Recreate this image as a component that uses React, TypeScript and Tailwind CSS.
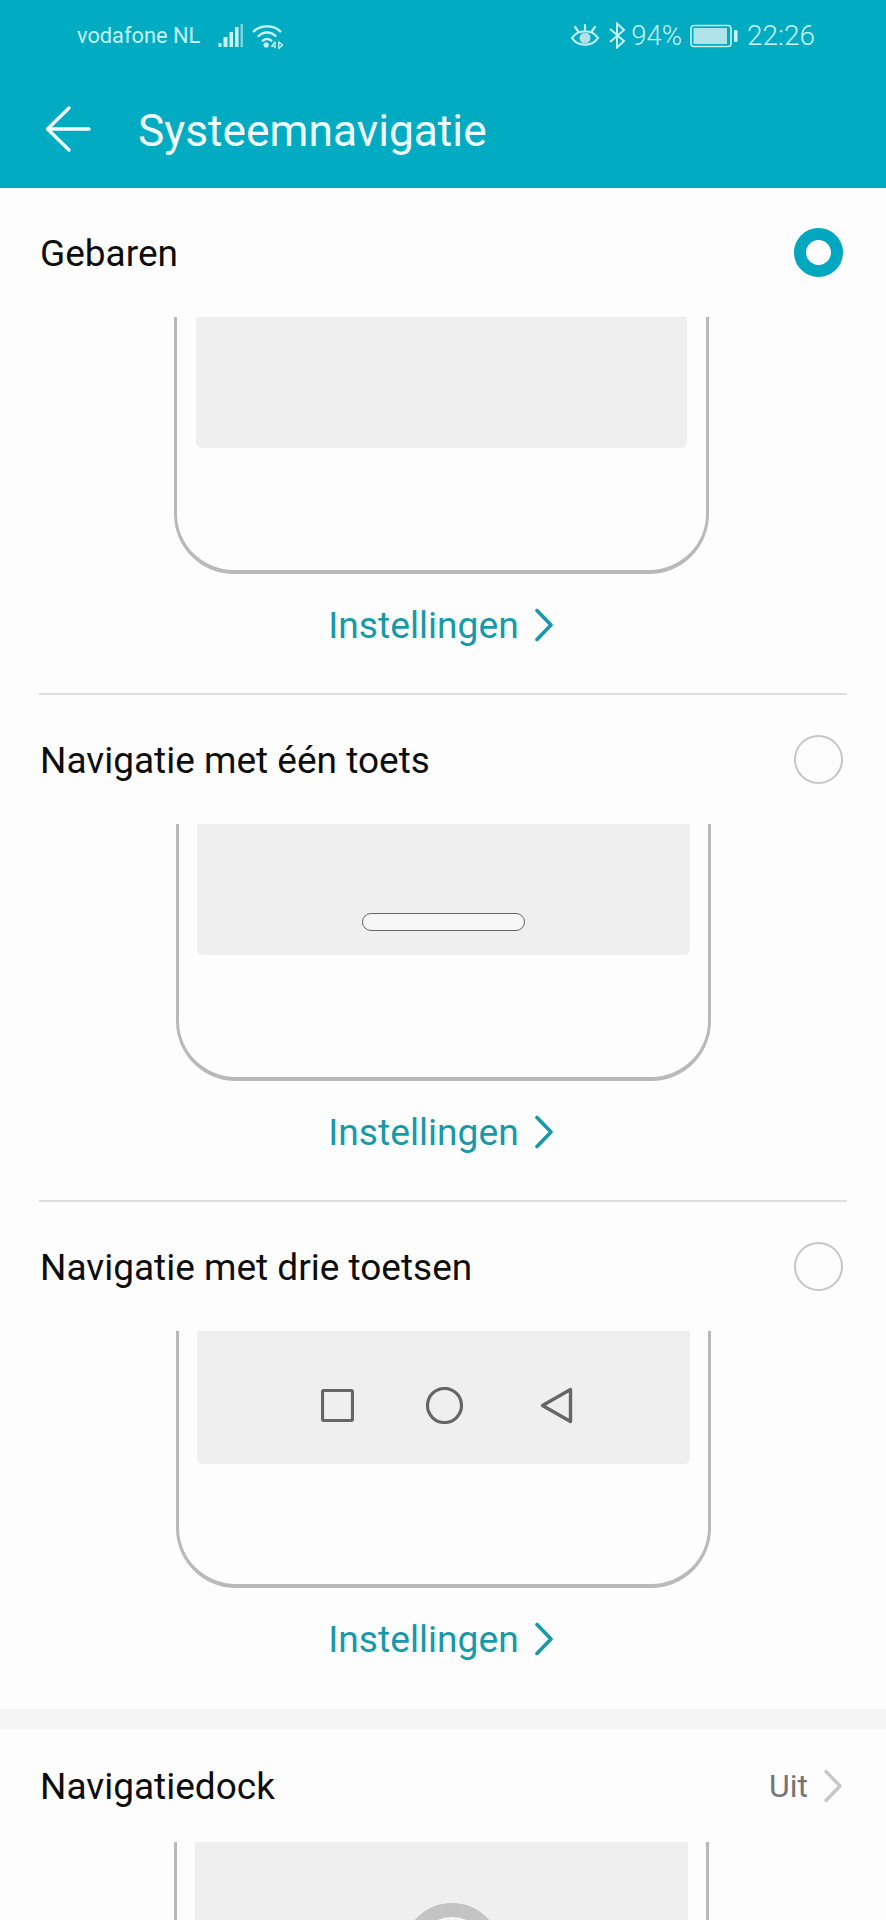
function Signal() {
  return (
    <svg width="26" height="26" viewBox="0 0 26 26" className="ml-[18px]">
      <rect x="0.5" y="20" width="3" height="4" fill="#c9f4f8" />
      <rect x="5.5" y="14" width="4" height="10" fill="#c9f4f8" />
      <rect x="11.5" y="9" width="3.5" height="15" fill="#c9f4f8" />
      <rect x="17" y="4" width="3.5" height="20" fill="#c9f4f8" />
      <rect x="22.5" y="1" width="2.5" height="23" fill="#7fd3df" />
    </svg>
  );
}

function Wifi() {
  return (
    <svg width="32" height="28" viewBox="0 0 34 28" fill="none" stroke="#c9f4f8" strokeWidth="2.6" className="ml-[8px]">
      <path d="M2 9C9 2 23 2 30 9" strokeLinecap="round" />
      <path d="M7 14C12 9 20 9 25 14" strokeLinecap="round" />
      <path d="M11.5 19C14 16.5 18 16.5 20.5 19" strokeLinecap="round" />
      <circle cx="15" cy="23.5" r="2.8" fill="#c9f4f8" stroke="none" />
      <path d="M24.5 20L21 25H25M24.5 20V27" strokeWidth="1.4" />
      <path d="M28.5 19.5V27L32.5 23.5L28.5 20.5" strokeWidth="1.4" />
    </svg>
  );
}

function Eye() {
  return (
    <svg width="30" height="26" viewBox="0 0 30 26" fill="none" stroke="#c9f4f8" strokeWidth="2.2" strokeLinecap="round">
      <path d="M2 15C8 6 22 6 28 15C22 24 8 24 2 15Z" />
      <circle cx="15" cy="15" r="5.5" fill="#b7dfe6" stroke="none" />
      <path d="M15 2V6M5 4L8 8M25 4L22 8" />
    </svg>
  );
}

function Bluetooth() {
  return (
    <svg width="18" height="27" viewBox="0 0 18 27" fill="none" stroke="#c9f4f8" strokeWidth="2" className="ml-[8px]">
      <path d="M2 7L16 19L9 25.5V1.5L16 8L2 20" />
    </svg>
  );
}

function Battery() {
  return (
    <svg width="48" height="24" viewBox="0 0 48 24" fill="none" className="ml-[8px]">
      <rect x="1" y="1.5" width="40" height="21" rx="3" stroke="#c9f4f8" strokeWidth="1.6" />
      <rect x="3.5" y="4" width="33.5" height="16" fill="#aee3ea" />
      <rect x="44" y="6" width="3.5" height="12" rx="1" fill="#c9f4f8" />
    </svg>
  );
}

function StatusBar() {
  return (
    <div className="flex h-[70px] items-center justify-between pl-[77px] pr-[71px] pt-[1px] text-[#c9f4f8]">
      <div className="flex items-center">
        <span className="text-[21.8px] leading-none">vodafone NL</span>
        <Signal />
        <Wifi />
      </div>
      <div className="flex items-center">
        <Eye />
        <Bluetooth />
        <span className="ml-[5px] text-[27.5px] font-light leading-none">94%</span>
        <Battery />
        <span className="ml-[9px] text-[28px] font-light leading-none">22:26</span>
      </div>
    </div>
  );
}

function Header() {
  return (
    <header className="h-[188px] bg-[#01abc2]">
      <StatusBar />
      <div className="flex h-[118px] items-start pl-[45px] pt-[34px]">
        <svg width="46" height="50" viewBox="0 0 46 50" fill="none" stroke="#f4fdfe" strokeWidth="3.4" strokeLinecap="round" strokeLinejoin="round">
          <path d="M44 25H3M24 4L2.5 25L24 46" />
        </svg>
        <h1 className="ml-[47px] text-[44.3px] leading-[54px] text-[#f1fcfd]">Systeemnavigatie</h1>
      </div>
    </header>
  );
}

function Radio({ selected }: { selected?: boolean }) {
  return selected ? (
    <div className="h-[49px] w-[49px] rounded-full border-[12px] border-[#00a7bf] bg-white" />
  ) : (
    <div className="h-[49px] w-[49px] rounded-full border-2 border-[#c6c6c6]" />
  );
}

function Settings() {
  return (
    <div className="flex items-center justify-center pr-[5px]">
      <span className="text-[37.2px] leading-[44px] text-[#1799a9]">Instellingen</span>
      <svg width="18" height="34" viewBox="0 0 18 34" fill="none" stroke="#1799a9" strokeWidth="3.6" strokeLinecap="round" strokeLinejoin="round" className="ml-[16px]">
        <path d="M2 2.5L16 17L2 31.5" />
      </svg>
    </div>
  );
}

function NavSection({
  label,
  selected,
  frameClass,
  panelClass,
  children,
  divider,
  bottom,
}: {
  label: string;
  selected?: boolean;
  frameClass: string;
  panelClass: string;
  children?: React.ReactNode;
  divider?: boolean;
  bottom: string;
}) {
  return (
    <section>
      <div className="flex h-[129px] items-center justify-between pl-[40px] pr-[43px]">
        <span className="pt-[2px] text-[37px] leading-[46px] text-[#0d0d0d]">{label}</span>
        <Radio selected={selected} />
      </div>
      <div className={frameClass}>
        <div className={panelClass}>{children}</div>
      </div>
      <div className={`${bottom} pt-[29px]`}>
        <Settings />
      </div>
      {divider && <div className="mx-[39px] h-[2px] bg-[#dedede]" />}
    </section>
  );
}

export default function App() {
  return (
    <div
      className="h-[1920px] w-[886px] overflow-hidden bg-[#fdfdfd]"
      style={{ fontFamily: "Roboto, sans-serif" }}
    >
      <Header />
      <NavSection
        label="Gebaren"
        selected
        frameClass="ml-[174px] h-[257px] w-[535px] rounded-b-[60px] border-x-[3px] border-b-[4px] border-[#b9b9b9] pl-[19px] pr-[19px]"
        panelClass="h-[131px] rounded-b-[6px] bg-[#efefef]"
        divider
        bottom="h-[119px]"
      />
      <NavSection
        label="Navigatie met één toets"
        frameClass="ml-[176px] h-[257px] w-[535px] rounded-b-[60px] border-x-[3px] border-b-[4px] border-[#b9b9b9] px-[18px]"
        panelClass="flex h-[131px] justify-center rounded-b-[6px] bg-[#efefef] pt-[89px]"
        divider
        bottom="h-[119px]"
      >
        <div className="h-[18px] w-[163px] rounded-[9px] border border-[#666666] bg-[#f6f6f6]" />
      </NavSection>
      <NavSection
        label="Navigatie met drie toetsen"
        frameClass="ml-[176px] h-[257px] w-[535px] rounded-b-[60px] border-x-[3px] border-b-[4px] border-[#b9b9b9] px-[18px]"
        panelClass="flex h-[133px] items-center rounded-b-[6px] bg-[#efefef] pl-[124px] pt-[16px]"
        bottom="h-[121px]"
      >
        <svg width="33" height="33" viewBox="0 0 33 33" fill="none" stroke="#666666" strokeWidth="3.2" strokeLinejoin="round">
          <rect x="1.5" y="1.5" width="30" height="30" rx="1.5" />
        </svg>
        <svg width="37" height="37" viewBox="0 0 37 37" fill="none" stroke="#666666" strokeWidth="3.2" className="ml-[72px]">
          <circle cx="18.5" cy="18.5" r="17" />
        </svg>
        <svg width="33" height="37" viewBox="0 0 33 37" fill="none" stroke="#666666" strokeWidth="3.4" strokeLinecap="round" strokeLinejoin="round" className="ml-[77px]">
          <path d="M2.5 18.5L30.5 2.5V34.5Z" />
        </svg>
      </NavSection>
      <div className="h-[20px] bg-[#f5f5f5]" />
      <section>
        <div className="flex h-[113px] items-center justify-between pl-[40px] pr-[44px]">
          <span className="pt-[2px] text-[37px] leading-[46px] text-[#0d0d0d]">Navigatiedock</span>
          <div className="flex items-center">
            <span className="text-[32px] leading-[44px] text-[#757575]">Uit</span>
            <svg width="18" height="34" viewBox="0 0 18 34" fill="none" stroke="#c8c8c8" strokeWidth="3.4" strokeLinecap="round" strokeLinejoin="round" className="ml-[16px]">
              <path d="M2 2.5L16 17L2 31.5" />
            </svg>
          </div>
        </div>
        <div className="ml-[174px] h-[257px] w-[535px] rounded-b-[60px] border-x-[3px] border-b-[4px] border-[#b9b9b9] px-[18px]">
          <div className="flex h-[131px] justify-center overflow-hidden bg-[#efefef] pl-[20px] pt-[61px]">
            <div className="h-[98px] w-[98px] shrink-0 rounded-full border-[14px] border-[#c4c4c4] bg-[#f5f5f5]" />
          </div>
        </div>
      </section>
    </div>
  );
}
